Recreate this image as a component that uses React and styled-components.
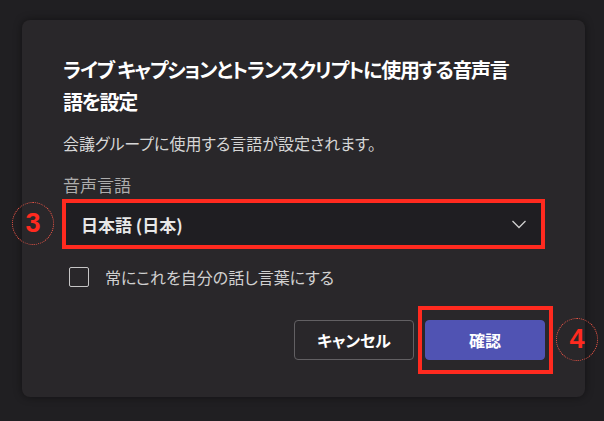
import React from 'react';
import styled, { createGlobalStyle } from 'styled-components';

const GlobalStyle = createGlobalStyle`
  html, body {
    margin: 0;
    padding: 0;
    background: #201f22;
  }
  body {
    font-family: "Noto Sans CJK JP", "Noto Sans", sans-serif;
    font-feature-settings: "palt";
  }
`;

const Page = styled.div`
  width: 604px;
  height: 421px;
  box-sizing: border-box;
  padding: 20px 19px 24px 22px;
  position: relative;
  overflow: hidden;
`;

const Dialog = styled.div`
  width: 563px;
  height: 377px;
  box-sizing: border-box;
  background: #29272a;
  border-radius: 8px;
  box-shadow: 0 0 8px rgba(0, 0, 0, 0.45);
  padding: 34px 40px 0 41px;
  display: flex;
  flex-direction: column;
`;

const Title = styled.h2`
  margin: 0;
  font-size: 20px;
  line-height: 32px;
  letter-spacing: -1.3px;
  font-weight: 700;
  color: #ffffff;
  white-space: nowrap;
`;

const Subtitle = styled.p`
  margin: 14px 0 0;
  font-size: 16px;
  line-height: 22px;
  color: #d6d6d6;
`;

const Label = styled.div`
  margin-top: 20px;
  font-size: 17px;
  line-height: 22px;
  color: #adadad;
`;

const Highlight = styled.div`
  position: relative;
  margin-top: 3px;
  margin-left: -1px;
  border: 4px solid #ff2a1f;
`;

const Marker = styled.span`
  position: absolute;
  width: 42px;
  height: 43px;
  box-sizing: border-box;
  border: 1px dotted #ff5a4a;
  border-radius: 50%;
  display: flex;
  align-items: center;
  justify-content: center;
  color: #ff2a1f;
  font-family: "Liberation Sans", Arial, sans-serif;
  font-weight: 700;
  font-size: 27px;
  line-height: 1;
  ${({ $left }) => $left != null && `left: ${$left}px;`}
  ${({ $right }) => $right != null && `right: ${$right}px;`}
  top: ${({ $top }) => $top}px;
`;

const Select = styled.div`
  height: 42px;
  background: #1f1e22;
  display: flex;
  align-items: center;
  justify-content: space-between;
  padding: 0 14px 0 15px;
  font-size: 17px;
  font-weight: 700;
  color: #e8e8e8;
`;

const CheckRow = styled.label`
  margin-top: 16px;
  margin-left: 6px;
  display: flex;
  align-items: center;
  gap: 16px;
  font-size: 16px;
  color: #d0d0d0;
`;

const Box = styled.span`
  width: 20px;
  height: 20px;
  box-sizing: border-box;
  border: 1px solid #c6c6c6;
  border-radius: 2px;
`;

const Actions = styled.div`
  margin-top: 31px;
  display: flex;
  justify-content: flex-end;
  gap: 11px;
`;

const Button = styled.button`
  width: 120px;
  height: 40px;
  border-radius: 4px;
  font-family: inherit;
  font-feature-settings: "palt";
  font-size: 16px;
  font-weight: 700;
  color: #ffffff;
  cursor: pointer;
  background: ${({ $primary }) => ($primary ? '#5053b3' : 'transparent')};
  border: 1px solid ${({ $primary }) => ($primary ? '#5053b3' : '#626063')};
`;

const Focus = styled.div`
  position: relative;

  &::after {
    content: '';
    position: absolute;
    top: -14px;
    bottom: -14px;
    left: -7px;
    right: -8px;
    border: 4px solid #ff2a1f;
    pointer-events: none;
  }
`;

const Chevron = () => (
  <svg width="16" height="10" viewBox="0 0 16 10" fill="none">
    <path d="M1.5 2 L8 8.5 L14.5 2" stroke="#cfcfcf" strokeWidth="1.3" />
  </svg>
);

export default function App() {
  return (
    <Page>
      <GlobalStyle />
      <Dialog>
        <Title>
          ライブ キャプションとトランスクリプトに使用する音声言
          <br />
          語を設定
        </Title>
        <Subtitle>会議グループに使用する言語が設定されます。</Subtitle>
        <Label>音声言語</Label>
        <Highlight>
          <Marker $left={-54} $top={-1}>3</Marker>
          <Select>
            <span>日本語 (日本)</span>
            <Chevron />
          </Select>
        </Highlight>
        <CheckRow>
          <Box />
          <span>常にこれを自分の話し言葉にする</span>
        </CheckRow>
        <Actions>
          <Button>キャンセル</Button>
          <Focus>
            <Button $primary>確認</Button>
            <Marker $right={-53} $top={-2}>4</Marker>
          </Focus>
        </Actions>
      </Dialog>
    </Page>
  );
}
